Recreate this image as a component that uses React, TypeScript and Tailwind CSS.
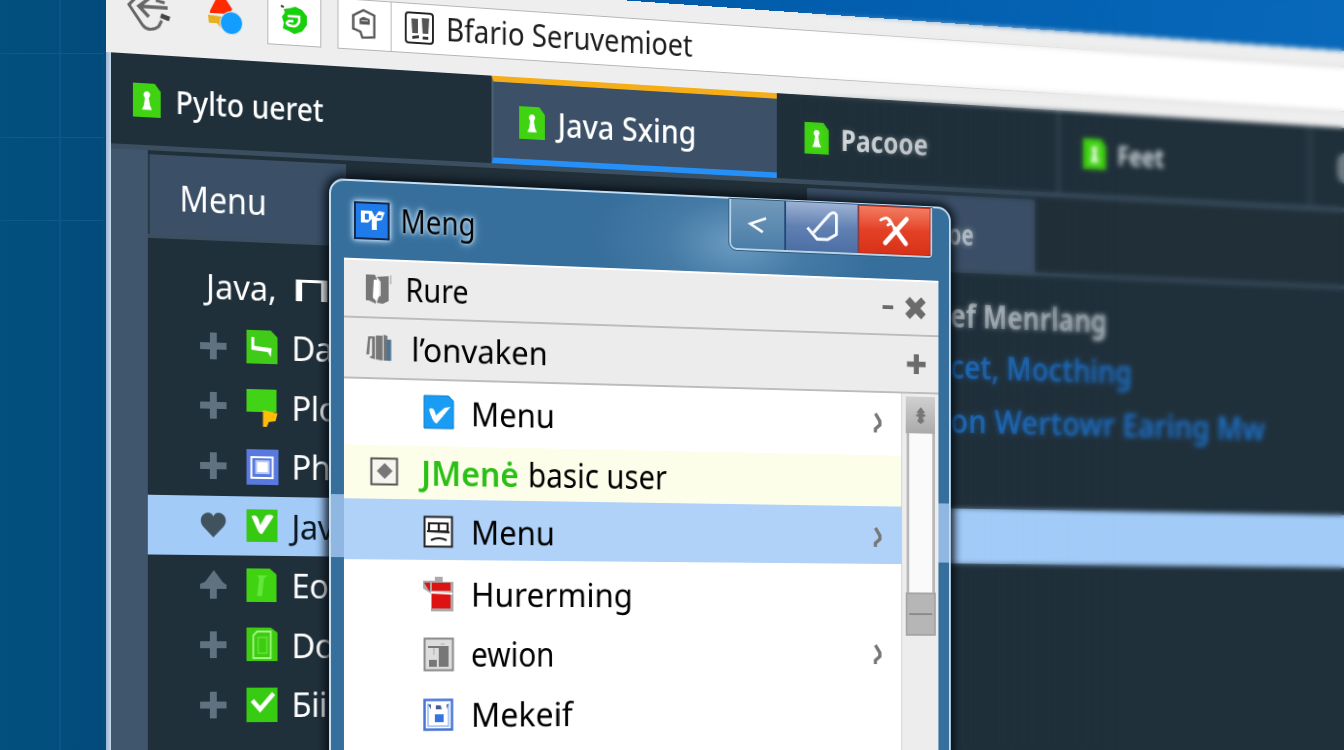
import { useLayoutEffect, useRef, useState, type ReactNode } from "react";

/* Single line of text stretched horizontally to the width of its box. */
function Fit({ children, className = "" }: { children: ReactNode; className?: string }) {
  const box = useRef<HTMLDivElement>(null);
  const text = useRef<HTMLSpanElement>(null);
  const [scale, setScale] = useState(1);
  useLayoutEffect(() => {
    if (box.current && text.current) setScale(box.current.clientWidth / text.current.offsetWidth);
  }, []);
  return (
    <div ref={box} className={`shrink-0 ${className}`}>
      <span
        ref={text}
        className="inline-block origin-left whitespace-nowrap"
        style={{ transform: `scaleX(${scale})` }}
      >
        {children}
      </span>
    </div>
  );
}

function TabIcon() {
  return (
    <svg viewBox="0 0 28 34" className="h-[34px] w-7 shrink-0">
      <path d="M0 0H22L28 8V34H0Z" fill="#3fd312" />
      <path d="M14 8a3.4 3.4 0 0 1 2.6 5.6L16 15l1.2 7 2 4.500H9l2-4.500L12 15l-.6-1.400A3.400 3.400 0 0 1 14 8Z" fill="#fff" />
    </svg>
  );
}

function Toolbar() {
  return (
    <div className="flex h-[88px] items-center bg-[#eeeeee] pb-[1px]">
      <svg viewBox="0 0 46 46" className="ml-[20px] h-[46px] w-[46px]" fill="none" stroke="#666" strokeWidth="3">
        <path d="M20 0L3 18l14 20c4 5 12 4 16 0l3-6" />
        <path d="M13 19H42M24 10l-11 9 10 10" strokeWidth="3.500" />
        <path d="M30 12l9 2" />
        <path d="M35 27l9 3" strokeWidth="5" stroke="#444" />
      </svg>
      <svg viewBox="0 0 40 44" className="ml-[34px] h-11 w-10">
        <path d="M5 18L13 2h6l9 13-4 5H5Z" fill="#ff2a00" />
        <path d="M3 22l14 1-1 11-4-4H4Z" fill="#e8b020" />
        <circle cx="27" cy="29" r="11.500" fill="#129dff" stroke="#eeeeee" strokeWidth="1" />
      </svg>
      <div className="ml-[24px] flex h-[52px] w-14 items-center justify-center border border-[#b4b4b4] bg-white">
        <svg viewBox="0 0 30 32" className="h-8 w-[30px]">
          <path d="M4 5l6-1 6-2 7 3 5 6v9l-5 7-8 3-6-3-6-2 1-6-2-6 3-4Z" fill="#18cf0c" />
          <path d="M1 2l3 1" stroke="#333" strokeWidth="2" />
          <path d="M8 12h12v5q-2 5-6 5-6 0-7-3l2-2h5" fill="none" stroke="#fff" strokeWidth="2.500" />
        </svg>
      </div>
      <div className="ml-[17px] flex h-[52px] flex-1 items-center border border-[#b4b4b4] bg-white">
        <div className="flex h-full w-14 items-center justify-center border-r border-[#b4b4b4]">
          <svg viewBox="0 0 30 34" className="h-[33px] w-[30px]" fill="none" stroke="#555" strokeWidth="2.400">
            <path d="M13 2l12 5v23l-13 1-2-6-8-3V8Z" />
            <path d="M9 11l4-2 7 2v6H9Z" fill="#555" stroke="none" />
            <path d="M11 13h7" stroke="#bbb" strokeWidth="1.500" />
          </svg>
        </div>
        <svg viewBox="0 0 34 36" className="ml-[13px] h-9 w-[34px]">
          <rect x="2" y="2" width="29" height="31" rx="3" fill="#fff" stroke="#222" strokeWidth="2" />
          <path d="M8 8h7v15H9ZM19 7h8l-1 16h-6Z" fill="#555" />
          <path d="M9 26l7-1v3l-7 1ZM20 26h6v3h-6Z" fill="#333" />
        </svg>
        <Fit className="-mt-[2px] ml-[11px] w-[271px] text-[32px] text-[#1c1c1c]">Bfario Seruvemioet</Fit>
      </div>
    </div>
  );
}

function TabRow() {
  return (
    <div className="flex h-[96px] border-b-[5px] border-[#3b4f60] bg-[#20303b] text-white">
      <div className="flex h-full w-[396px] items-center pl-[22px]">
        <TabIcon />
        <Fit className="ml-[15px] w-[152px] text-[33px] font-medium">Pylto ueret</Fit>
      </div>
      <div className="flex h-full w-[318px] items-center border-t-[6px] border-b-[6px] border-l-2 border-t-[#f5ae18] border-b-[#2490f8] border-l-[#4b6277] bg-[#3c5168] pl-[28px] pt-[3px]">
        <TabIcon />
        <Fit className="ml-[14px] w-[154px] text-[34px] font-medium">Java Sxing</Fit>
      </div>
      <div className="flex h-full w-[337px] items-center border-r-[6px] border-[#2c3d49] pl-[32px]">
        <TabIcon />
        <Fit className="ml-[14px] w-[103px] text-[32px] font-bold text-[#dfe3e6]">Pacooe</Fit>
      </div>
      <div className="flex h-full w-[308px] items-center pl-[27px]">
        <TabIcon />
        <Fit className="ml-[14px] w-[58px] text-[30px] font-bold text-[#d0d6da]">Feet</Fit>
      </div>
      <div className="flex flex-1 items-center border-l-[10px] border-[#283844] pl-[30px]">
        <div className="h-9 w-9 rounded-xl bg-[#6f7a82]" />
      </div>
    </div>
  );
}

function Plus() {
  return (
    <svg viewBox="0 0 29 29" className="h-[29px] w-[29px] shrink-0" fill="#607180">
      <path d="M11 1h7v10h10v7H18v10h-7V18H1v-7h10Z" />
    </svg>
  );
}

function UpMark() {
  return (
    <svg viewBox="0 0 29 30" className="h-[30px] w-[29px] shrink-0" fill="#607180">
      <path d="M15 0L24 12l4 3v4H18v10h-7V19H1v-5l5-2Z" />
    </svg>
  );
}

function Heart() {
  return (
    <svg viewBox="0 0 29 29" className="h-[29px] w-[29px] shrink-0" fill="#41525f">
      <path d="M14.500 27L4 16C-1 10 3 2 9 2c3 0 5 2 5.500 4C15 4 17 2 20 2c6 0 10 8 5 14Z" />
    </svg>
  );
}

const sideIcons: Record<string, ReactNode> = {
  da: (
    <>
      <path d="M0 0H25L32 7V34H0Z" fill="#3fcb17" />
      <path d="M5 7h3v9l18 2-1 9-3-5-17-2Z" fill="#fff" />
    </>
  ),
  pl: (
    <>
      <rect width="31" height="23" fill="#41d416" />
      <path d="M17 21l15 3-2 8-7 1-2 5h-4Z" fill="#ffbd0a" />
    </>
  ),
  ph: (
    <>
      <rect width="33" height="36" fill="#5979df" />
      <rect x="5" y="8" width="22" height="21" fill="none" stroke="#fff" strokeWidth="2" />
      <path d="M10 12h13v12H10Z" fill="#fff" stroke="#b8c8fa" strokeWidth="2" />
    </>
  ),
  ja: (
    <>
      <rect y="1" width="32" height="33" fill="#35c911" />
      <path d="M5 8q6-3 8 5l1 4 6-10q6-2 8 1L16 26q-3 0-5-5Z" fill="#fff" />
    </>
  ),
  eo: (
    <>
      <path d="M0 0H24L31 6V34H0Z" fill="#3fd312" />
      <path d="M11 7h11l-4 3-2 18h-5l2-18Z" fill="#65e63d" />
    </>
  ),
  do: (
    <>
      <path d="M0 0H25L32 5V34H0Z" fill="#3fcb12" />
      <path d="M7 8l4-4h14v27H7Z" fill="none" stroke="#a4f684" strokeWidth="1.800" />
      <path d="M11 10h11M12 10v16h9V10" fill="none" stroke="#5de736" strokeWidth="1.500" />
    </>
  ),
  bi: (
    <>
      <rect width="32" height="35" fill="#37cb12" />
      <path d="M6 13l8 9L28 6" fill="none" stroke="#fff" strokeWidth="4.500" />
    </>
  ),
};

function SideRow({
  mark,
  icon,
  label,
  selected = false,
  children,
}: {
  mark: ReactNode;
  icon: string;
  label: string;
  selected?: boolean;
  children?: ReactNode;
}) {
  return (
    <div className={`flex h-[60.500px] shrink-0 items-center ${selected ? "bg-[#a2cbf8] text-[#0b1620]" : "text-white"}`}>
      <div className="flex w-[880px] items-center pl-[52px]">
        {mark}
        <svg viewBox="0 0 33 38" className="ml-[19px] mt-[3px] h-[38px] w-[34px] shrink-0">
          {sideIcons[icon]}
        </svg>
        <span className="ml-[13px] text-[34px] leading-[44px] tracking-[-0.5px]">{label}</span>
      </div>
      {children}
    </div>
  );
}

function BackWindow() {
  return (
    <div className="absolute -top-[36px] left-[106px] flex h-[960px] w-[1500px] origin-top-left flex-col [transform:matrix3d(1,0.0701,0,0.0001,0,1,0,0,0,0,1,0,0,0,0,1)]">
      <Toolbar />
      <div className="flex flex-1 bg-[#3f566d]">
        <div className="w-[5px] bg-gradient-to-r from-[#9db6d3] to-[#c7d9ee]" />
        <div className="flex flex-1 flex-col">
          <TabRow />
          <div className="ml-[37px] flex flex-1 flex-col bg-[#20303b]">
            <div className="mt-[1px] flex h-[87px] items-stretch border-b-[4px] border-[#3b4f60] bg-[#212f39] pt-[3px] text-white">
              <div className="flex w-[204px] items-center border-l-2 border-[#263845] bg-[#3b5067] pt-[6px] pl-[30px]">
                <Fit className="w-[89px] text-[36px]">Menu</Fit>
              </div>
              <div className="ml-[508px] flex w-[270px] items-center bg-[#3b4f67] pt-[3px] pl-[166px]">
                <Fit className="w-[30px] text-[32px] font-bold text-[#cfd6dc]">oe</Fit>
              </div>
            </div>
            <div className="mt-[17px] flex h-[59px] shrink-0 items-center text-white">
              <div className="flex w-[880px] items-center pl-[59px]">
                <Fit className="w-[73px] text-[34px]">Java,</Fit>
                <Fit className="ml-[14px] w-[44px] text-[31px] font-medium">П</Fit>
              </div>
              <Fit className="w-[190px] text-[36px] font-bold text-[#bfc7cd]">ef Menrlang</Fit>
            </div>
            <SideRow mark={<Plus />} icon="da" label="Data">
              <Fit className="-mt-[6px] w-[221px] text-[36px] font-semibold text-[#1d74d0]">cet, Mocthing</Fit>
            </SideRow>
            <SideRow mark={<Plus />} icon="pl" label="Plo">
              <Fit className="-mt-[10px] w-[389px] text-[36px] font-semibold text-[#1d74d0]">on Wertowr Earing Mw</Fit>
            </SideRow>
            <SideRow mark={<Plus />} icon="ph" label="Phn" />
            <SideRow mark={<Heart />} icon="ja" label="Java" selected />
            <SideRow mark={<UpMark />} icon="eo" label="Eo" />
            <SideRow mark={<Plus />} icon="do" label="Do" />
            <SideRow mark={<Plus />} icon="bi" label="Бii" />
          </div>
        </div>
      </div>
    </div>
  );
}

function Chevron() {
  return (
    <svg viewBox="0 0 12 24" className="ml-auto mr-[20px] h-6 w-3" fill="none" stroke="#777" strokeWidth="3.600">
      <path d="M3 2l5 8v4l-5 4v4" />
    </svg>
  );
}

function MenuRow({ icon, children, arrow = false, className = "" }: { icon: ReactNode; children: ReactNode; arrow?: boolean; className?: string }) {
  return (
    <div className={`flex h-[61px] shrink-0 items-center pl-[80px] ${className}`}>
      <svg viewBox="0 0 32 36" className="h-9 w-8 shrink-0">
        {icon}
      </svg>
      <div className="ml-[17px]">{children}</div>
      {arrow && <Chevron />}
    </div>
  );
}

function Dialog() {
  return (
    <div className="absolute left-[329px] top-[178px] flex h-[660px] w-[663px] origin-top-left flex-col rounded-t-[15px] border-2 border-[#c5dff2] bg-[linear-gradient(to_bottom,#376f9c_0px,#376f9c_314px,#8fb7e2_314px,#8fb7e2_377px,#376f9c_377px)] pl-[13px] pr-[12px] text-black shadow-[0_0_10px_4px_rgba(5,12,20,0.9)] [transform:matrix3d(1,0.047,0,0.0001,0,1,0,0,0,0,1,0,0,0,0,1)]">
      <div className="-ml-[13px] -mr-[12px] flex h-[77px] shrink-0 items-start rounded-t-[13px] bg-[radial-gradient(ellipse_150px_90px_at_64%_60%,rgba(120,166,202,0.800)_0%,rgba(90,140,180,0.400)_50%,rgba(55,111,156,0)_100%)] pl-[23px]">
        <svg viewBox="0 0 36 38" className="mt-[20px] h-[38px] w-9 [filter:drop-shadow(0_0_2px_#d5ecff)_drop-shadow(0_0_3px_#a9d0ee)]">
          <rect x="1" y="1" width="34" height="36" fill="#1f7bea" stroke="#12284d" strokeWidth="2" />
          <path d="M7 9v12h7l4-4v11h5V19l5-1 3-8-6-1-4 6-3-6Z" fill="#fff" />
          <path d="M11 12h4v6h-4ZM24 13h4l-1 3h-4Z" fill="#1f7bea" />
        </svg>
        <Fit className="ml-[11px] mt-[16px] w-[77px] text-[32px] leading-[44px] [text-shadow:0_0_3px_#b9dcf4,0_0_6px_#b9dcf4,0_0_10px_#a9d0ee]">Meng</Fit>
        <div className="ml-auto mr-[19px] flex h-[53px] w-[225px] rounded-bl-lg rounded-br-sm border-2 border-t-0 border-[#b8d3e8] outline outline-1 outline-[#315a80]">
          <div className="flex w-[60px] items-center justify-center rounded-bl-md border-r-2 border-[#1f4975] bg-gradient-to-b from-[#7199ba] to-[#4b7ea8]">
            <svg viewBox="0 0 24 22" className="h-[20px] w-6" fill="none" stroke="#fff" strokeWidth="3">
              <path d="M22 3L3 10l15 9" />
            </svg>
          </div>
          <div className="flex w-[80px] items-center justify-center border-r border-[#3d5788] bg-gradient-to-b from-[#9db2d3] via-[#6180b2] to-[#4c6fa5]">
            <svg viewBox="0 0 38 38" className="h-[37px] w-[38px]" fill="none" stroke="#f5faff" strokeWidth="3.200" strokeLinejoin="round">
              <path d="M2 20l11 12h12l10-6V5q-3-5-8 0L9 25" />
            </svg>
          </div>
          <div className="flex flex-1 items-center justify-center border border-[#b92c1c] bg-gradient-to-b from-[#f27b60] via-[#e34126] to-[#d83217]">
            <svg viewBox="0 0 36 34" className="h-[34px] w-9" fill="none" stroke="#fff" strokeLinecap="round">
              <path d="M31 4L7 30" strokeWidth="5" />
              <path d="M18 15l12 15" strokeWidth="5" />
              <path d="M2 6q7-5 11 1l5 8M11 6l2 3-3 2" strokeWidth="3" />
            </svg>
          </div>
        </div>
      </div>
      <div className="flex flex-1 flex-col bg-[#ececec] text-[34px] font-[450]">
        <div className="flex h-[60px] shrink-0 items-center border-b-2 border-t-2 border-b-[#bcbcbc] border-t-white pl-[21px]">
          <svg viewBox="0 0 28 31" className="h-[31px] w-7" fill="#777">
            <path d="M1 1h9l2 4-1 25-7-3H1ZM12 3l12-1v25l-6 3-6-1 2-6 2-1V8Z" />
            <path d="M9 6h5v16l-3 5-3-3Z" fill="#fff" />
            <path d="M26 1v9" stroke="#999" />
          </svg>
          <Fit className="ml-[13px] w-[65px] text-[33px]">Rure</Fit>
          <div className="ml-auto h-[4px] w-[12px] bg-[#6b6b6b]" />
          <svg viewBox="0 0 24 24" className="ml-[13px] mr-[14px] h-6 w-6" stroke="#6b6b6b" strokeWidth="7.500">
            <path d="M3 3l18 18M21 3L3 21" />
          </svg>
        </div>
        <div className="flex h-[61px] shrink-0 items-center border-b-2 border-[#bcbcbc] pl-[21px]">
          <svg viewBox="0 0 28 30" className="h-[29px] w-7" fill="#777">
            <path d="M3 3h7v24l-6-2 3-2V5l-2 1-1 16H1ZM11 2h7v26l-7-1ZM19 1l4 1v26h-4Z" />
            <path d="M22 6h5v22h-5Z" fill="#4e7491" />
          </svg>
          <Fit className="ml-[19px] w-[141px] text-[33px]">l’onvaken</Fit>
          <svg viewBox="0 0 24 24" className="ml-auto mr-[13px] h-[23px] w-6" fill="#6b6b6b">
            <path d="M9 1h6v8h8v6h-8v8H9v-8H1V9h8Z" />
          </svg>
        </div>
        <div className="flex flex-1">
          <div className="flex w-[593px] flex-col border-r border-[#d0d0d0] bg-white">
            <MenuRow
              arrow
              className="mb-[5px] pt-[3px]"
              icon={
                <>
                  <path d="M1 1h25l5 5v28H1Z" fill="#199cf4" stroke="#117dcc" />
                  <path d="M6 15q5-4 7 6l9-8 6-1-14 17q-4 0-8-14Z" fill="#fff" />
                </>
              }
            >
              <Fit className="w-[87px]">Menu</Fit>
            </MenuRow>
            <div className="flex h-[54px] shrink-0 items-center bg-[#fdfeea] pl-[26px]">
              <svg viewBox="0 0 30 30" className="h-[30px] w-[30px]">
                <rect x="1.500" y="1.500" width="26" height="26" fill="#f6f6ee" stroke="#555" strokeWidth="2" />
                <path d="M15 6l8 8-8 8-8-8Z" fill="#777" />
              </svg>
              <Fit className="ml-[22px] w-[101px] font-semibold text-[#2bc016]">JMenė</Fit>
              <Fit className="ml-[9px] w-[147px]">basic user</Fit>
            </div>
            <MenuRow
              arrow
              className="bg-[#b0d1f8] pt-1"
              icon={
                <>
                  <rect x="1.500" y="2.500" width="28" height="30" fill="#fff" stroke="#222" strokeWidth="2" />
                  <path d="M6 9h19v8H6ZM16 9v8M4 17l23 1M8 26q8-4 16 0" fill="none" stroke="#222" strokeWidth="2.200" />
                </>
              }
            >
              <Fit className="w-[87px]">Menu</Fit>
            </MenuRow>
            <MenuRow
              className="mt-[4px]"
              icon={
                <>
                  <path d="M12 0h8v5h11v30H8V17L0 12V4h12Z" fill="#aaa" />
                  <path d="M1 6h27v8H6ZM9 17h19v15H9Z" fill="#de1212" />
                  <path d="M8 5v11" stroke="#aaa" strokeWidth="2" />
                  <path d="M8 16l22 1" stroke="#fff" strokeWidth="2" />
                </>
              }
            >
              <Fit className="w-[169px]">Hurerming</Fit>
            </MenuRow>
            <MenuRow
              arrow
              icon={
                <>
                  <rect x="1.500" y="1.500" width="29" height="32" fill="#ddd" stroke="#888" strokeWidth="2" />
                  <path d="M5 9h21v21H16V11H5ZM6 23h8v7H6Z" fill="#777" />
                  <path d="M11 11v7M18 7h4" stroke="#aaa" />
                </>
              }
            >
              <Fit className="w-[87px]">ewion</Fit>
            </MenuRow>
            <MenuRow
              icon={
                <>
                  <rect x="1.500" y="2.500" width="28" height="30" fill="#fff" stroke="#4473d6" strokeWidth="2.500" />
                  <path d="M5 6v23h21V6" fill="none" stroke="#9bbcf5" strokeWidth="1.500" />
                  <path d="M5 7h3v5ZM26 7h-2v5ZM13 8h5l1 4h-6Z" fill="#415c99" />
                  <rect x="12" y="17" width="9" height="8" fill="#3474df" />
                </>
              }
            >
              <Fit className="w-[106px]">Mekeif</Fit>
            </MenuRow>
          </div>
          <div className="flex flex-1 flex-col items-center bg-[#ededed] pt-[3px]">
            <div className="flex h-[39px] w-[33px] items-center justify-center bg-gradient-to-b from-[#d0d0d0] to-[#aaa]">
              <svg viewBox="0 0 14 18" className="h-[18px] w-[14px]" fill="#777">
                <path d="M7 0l5 6H9l4 3-4 2 2 4-4 3-4-3 2-4-4-2 4-3H2Z" />
              </svg>
            </div>
            <div className="h-[169px] w-[32px] border-x-[3px] border-[#b8b8b8] bg-[#fafafa]" />
            <div className="flex h-[46px] w-[34px] items-center border-2 border-[#a5a5a5] bg-[#b6b6b6] px-[2px]">
              <div className="h-[2px] w-full bg-[#8a8a8a]" />
            </div>
          </div>
        </div>
      </div>
    </div>
  );
}

export default function App() {
  return (
    <div className="relative h-[750px] w-[1344px] overflow-hidden bg-[linear-gradient(to_right,#02507e_0px,#024b7c_105px,#0059a8_560px,#0868ba_1344px)] font-['Noto_Sans','Open_Sans',sans-serif]">
      <div className="h-full w-[104px] border-r border-[#17486c] bg-[linear-gradient(to_bottom,transparent_53px,#0e5987_53px,#0e5987_54px,transparent_54px,transparent_137px,#0e5987_137px,#0e5987_138px,transparent_138px,transparent_220px,#0e5987_220px,#0e5987_221px,transparent_221px),linear-gradient(to_right,transparent_59px,#0a5583_59px,#0a5583_61px,transparent_61px)]" />
      <BackWindow />
      <div className="pointer-events-none absolute inset-y-0 right-0 w-[564px] backdrop-blur-[2.500px] [mask-image:linear-gradient(to_right,transparent,black_60%)]" />
      <Dialog />
    </div>
  );
}
